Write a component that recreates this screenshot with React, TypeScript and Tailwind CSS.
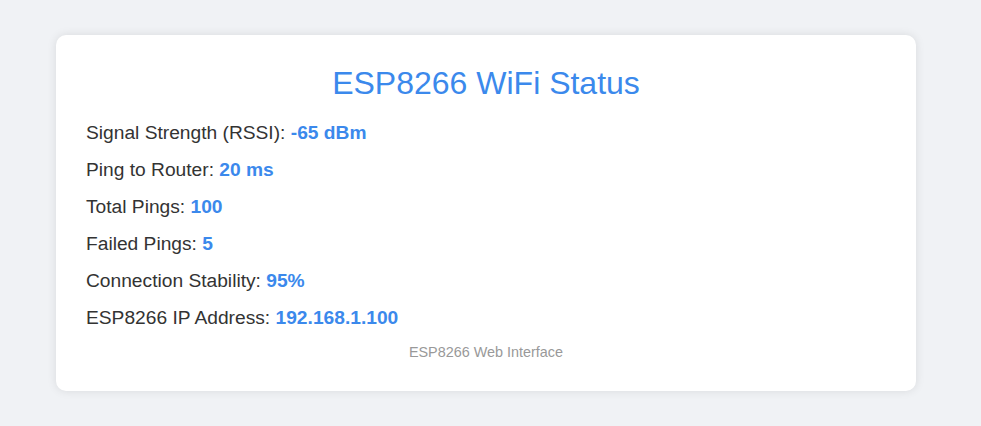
const stats = [
  { label: "Signal Strength (RSSI):", value: "-65 dBm" },
  { label: "Ping to Router:", value: "20 ms" },
  { label: "Total Pings:", value: "100" },
  { label: "Failed Pings:", value: "5" },
  { label: "Connection Stability:", value: "95%" },
  { label: "ESP8266 IP Address:", value: "192.168.1.100" },
];

const App = () => {
  return (
    <div className="min-h-[426px] bg-[#f0f2f5] pt-[35px] font-['Liberation_Sans',Arial,sans-serif]">
      <div className="ml-[56px] w-[860px] rounded-[10px] bg-white p-[30px] shadow-[0_0_10px_rgba(0,0,0,0.1)]">
        <h1 className="mb-[17px] text-center text-[32px] leading-[37px] text-[#3b89ec]">
          ESP8266 WiFi Status
        </h1>
        <div className="flex flex-col gap-[10px]">
          {stats.map((s) => (
            <p key={s.label} className="text-[19.2px] leading-[27px] text-[#333]">
              {s.label} <span className="font-bold text-[#3b89ec]">{s.value}</span>
            </p>
          ))}
        </div>
        <p className="mt-[13px] text-center text-[14.4px] leading-[17px] text-[#999]">
          ESP8266 Web Interface
        </p>
      </div>
    </div>
  );
};

export default App;
